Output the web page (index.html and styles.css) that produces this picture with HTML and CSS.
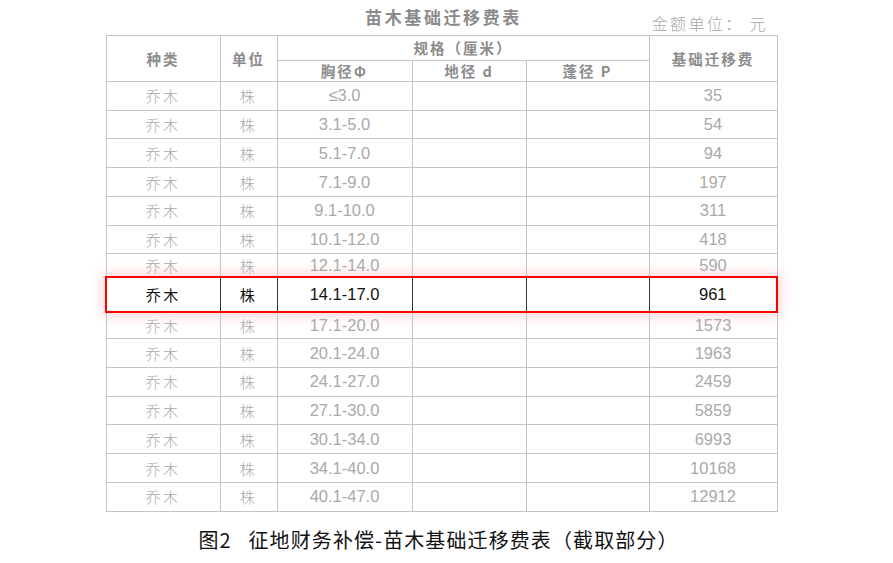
FILE: index.html
```html
<!DOCTYPE html>
<html lang="zh">
<head>
<meta charset="utf-8">
<link rel="stylesheet" href="styles.css">
</head>
<body>
<div class="figure">
  <div class="title-row">
    <div class="title">苗木基础迁移费表</div>
    <div class="unit">金额单位： 元</div>
  </div>
  <table class="fee-table">
    <colgroup>
      <col class="c1"><col class="c2"><col class="c3"><col class="c4"><col class="c5"><col class="c6">
    </colgroup>
    <thead>
      <tr class="h1">
        <th rowspan="2">种类</th>
        <th rowspan="2">单位</th>
        <th colspan="3">规格（厘米）</th>
        <th rowspan="2">基础迁移费</th>
      </tr>
      <tr class="h2">
        <th>胸径Φ</th>
        <th>地径 d</th>
        <th>蓬径 P</th>
      </tr>
    </thead>
    <tbody>
      <tr><td class="cn">乔木</td><td class="cn">株</td><td>≤3.0</td><td></td><td></td><td>35</td></tr>
      <tr><td class="cn">乔木</td><td class="cn">株</td><td>3.1-5.0</td><td></td><td></td><td>54</td></tr>
      <tr><td class="cn">乔木</td><td class="cn">株</td><td>5.1-7.0</td><td></td><td></td><td>94</td></tr>
      <tr><td class="cn">乔木</td><td class="cn">株</td><td>7.1-9.0</td><td></td><td></td><td>197</td></tr>
      <tr><td class="cn">乔木</td><td class="cn">株</td><td>9.1-10.0</td><td></td><td></td><td>311</td></tr>
      <tr><td class="cn">乔木</td><td class="cn">株</td><td>10.1-12.0</td><td></td><td></td><td>418</td></tr>
      <tr class="pre"><td class="cn">乔木</td><td class="cn">株</td><td>12.1-14.0</td><td></td><td></td><td>590</td></tr>
      <tr class="hl"><td class="cn">乔木</td><td class="cn">株</td><td>14.1-17.0</td><td></td><td></td><td>961</td></tr>
      <tr class="post"><td class="cn">乔木</td><td class="cn">株</td><td>17.1-20.0</td><td></td><td></td><td>1573</td></tr>
      <tr><td class="cn">乔木</td><td class="cn">株</td><td>20.1-24.0</td><td></td><td></td><td>1963</td></tr>
      <tr><td class="cn">乔木</td><td class="cn">株</td><td>24.1-27.0</td><td></td><td></td><td>2459</td></tr>
      <tr><td class="cn">乔木</td><td class="cn">株</td><td>27.1-30.0</td><td></td><td></td><td>5859</td></tr>
      <tr><td class="cn">乔木</td><td class="cn">株</td><td>30.1-34.0</td><td></td><td></td><td>6993</td></tr>
      <tr><td class="cn">乔木</td><td class="cn">株</td><td>34.1-40.0</td><td></td><td></td><td>10168</td></tr>
      <tr><td class="cn">乔木</td><td class="cn">株</td><td>40.1-47.0</td><td></td><td></td><td>12912</td></tr>
    </tbody>
  </table>
  <div class="caption">图2&nbsp;&nbsp;&nbsp;征地财务补偿-苗木基础迁移费表（截取部分）</div>
</div>
</body>
</html>
```
FILE: styles.css
```css
html, body {
  margin: 0;
  padding: 0;
  background: #ffffff;
}

body {
  font-family: "Liberation Sans", "Noto Sans CJK SC", sans-serif;
}

.figure {
  width: 671px;
  margin-left: 105px;
}

.title-row {
  position: relative;
  height: 35px;
}

.title {
  text-align: center;
  padding-top: 6px;
  padding-left: 6px;
  font-family: "Noto Sans CJK SC", sans-serif;
  font-weight: 700;
  font-size: 17px;
  line-height: 22px;
  letter-spacing: 2.6px;
  color: #8a8a8a;
}

.unit {
  position: absolute;
  right: 8px;
  top: 12px;
  font-family: "Noto Sans CJK SC", sans-serif;
  font-weight: 300;
  font-size: 16px;
  line-height: 22px;
  letter-spacing: 2.4px;
  color: #a8a8a8;
}

.fee-table {
  width: 671px;
  border-collapse: collapse;
  table-layout: fixed;
  border: 1px solid #bdbdbd;
}

.c1 { width: 114px; }
.c2 { width: 57px; }
.c3 { width: 135px; }
.c4 { width: 114px; }
.c5 { width: 123px; }
.c6 { width: 128px; }

.fee-table th,
.fee-table td {
  border: 1px solid #c4c4c4;
  padding: 0;
  text-align: center;
  vertical-align: middle;
}

.fee-table th {
  font-family: "Noto Sans CJK SC", sans-serif;
  font-weight: 700;
  font-size: 14.5px;
  letter-spacing: 2px;
  color: #8c8c8c;
}

.h1 th { height: 24px; line-height: 18px; }
.h2 th { height: 20px; line-height: 18px; }

.fee-table td {
  height: 27.73px;
  font-size: 16.5px;
  color: #a9a9a9;
}

.fee-table td.cn {
  font-family: "Noto Sans CJK SC", sans-serif;
  font-size: 15px;
  font-weight: 300;
  letter-spacing: 2.5px;
}

.fee-table tr.pre td { height: 22px; }
.fee-table tr.post td { height: 25px; }

.fee-table tr.hl td {
  height: 33px;
  color: #111111;
  border-top: 2px solid #ff0000;
  border-bottom: 2px solid #ff0000;
  border-left-color: #333333;
  border-right-color: #333333;
}

.fee-table tr.hl td:first-child {
  border-left: 2px solid #ff0000;
}

.fee-table tr.hl td:last-child {
  border-right: 2px solid #ff0000;
}

.fee-table tr.hl td.cn {
  font-weight: 400;
  color: #111111;
}

.fee-table tr.hl {
  box-shadow: 0 0 14px 3px rgba(255, 70, 70, 0.25);
}

.caption {
  margin-top: 14px;
  margin-left: -4px;
  text-align: center;
  font-family: "Noto Sans CJK SC", sans-serif;
  font-size: 20px;
  line-height: 28px;
  color: #111111;
  letter-spacing: 1.1px;
}
```
